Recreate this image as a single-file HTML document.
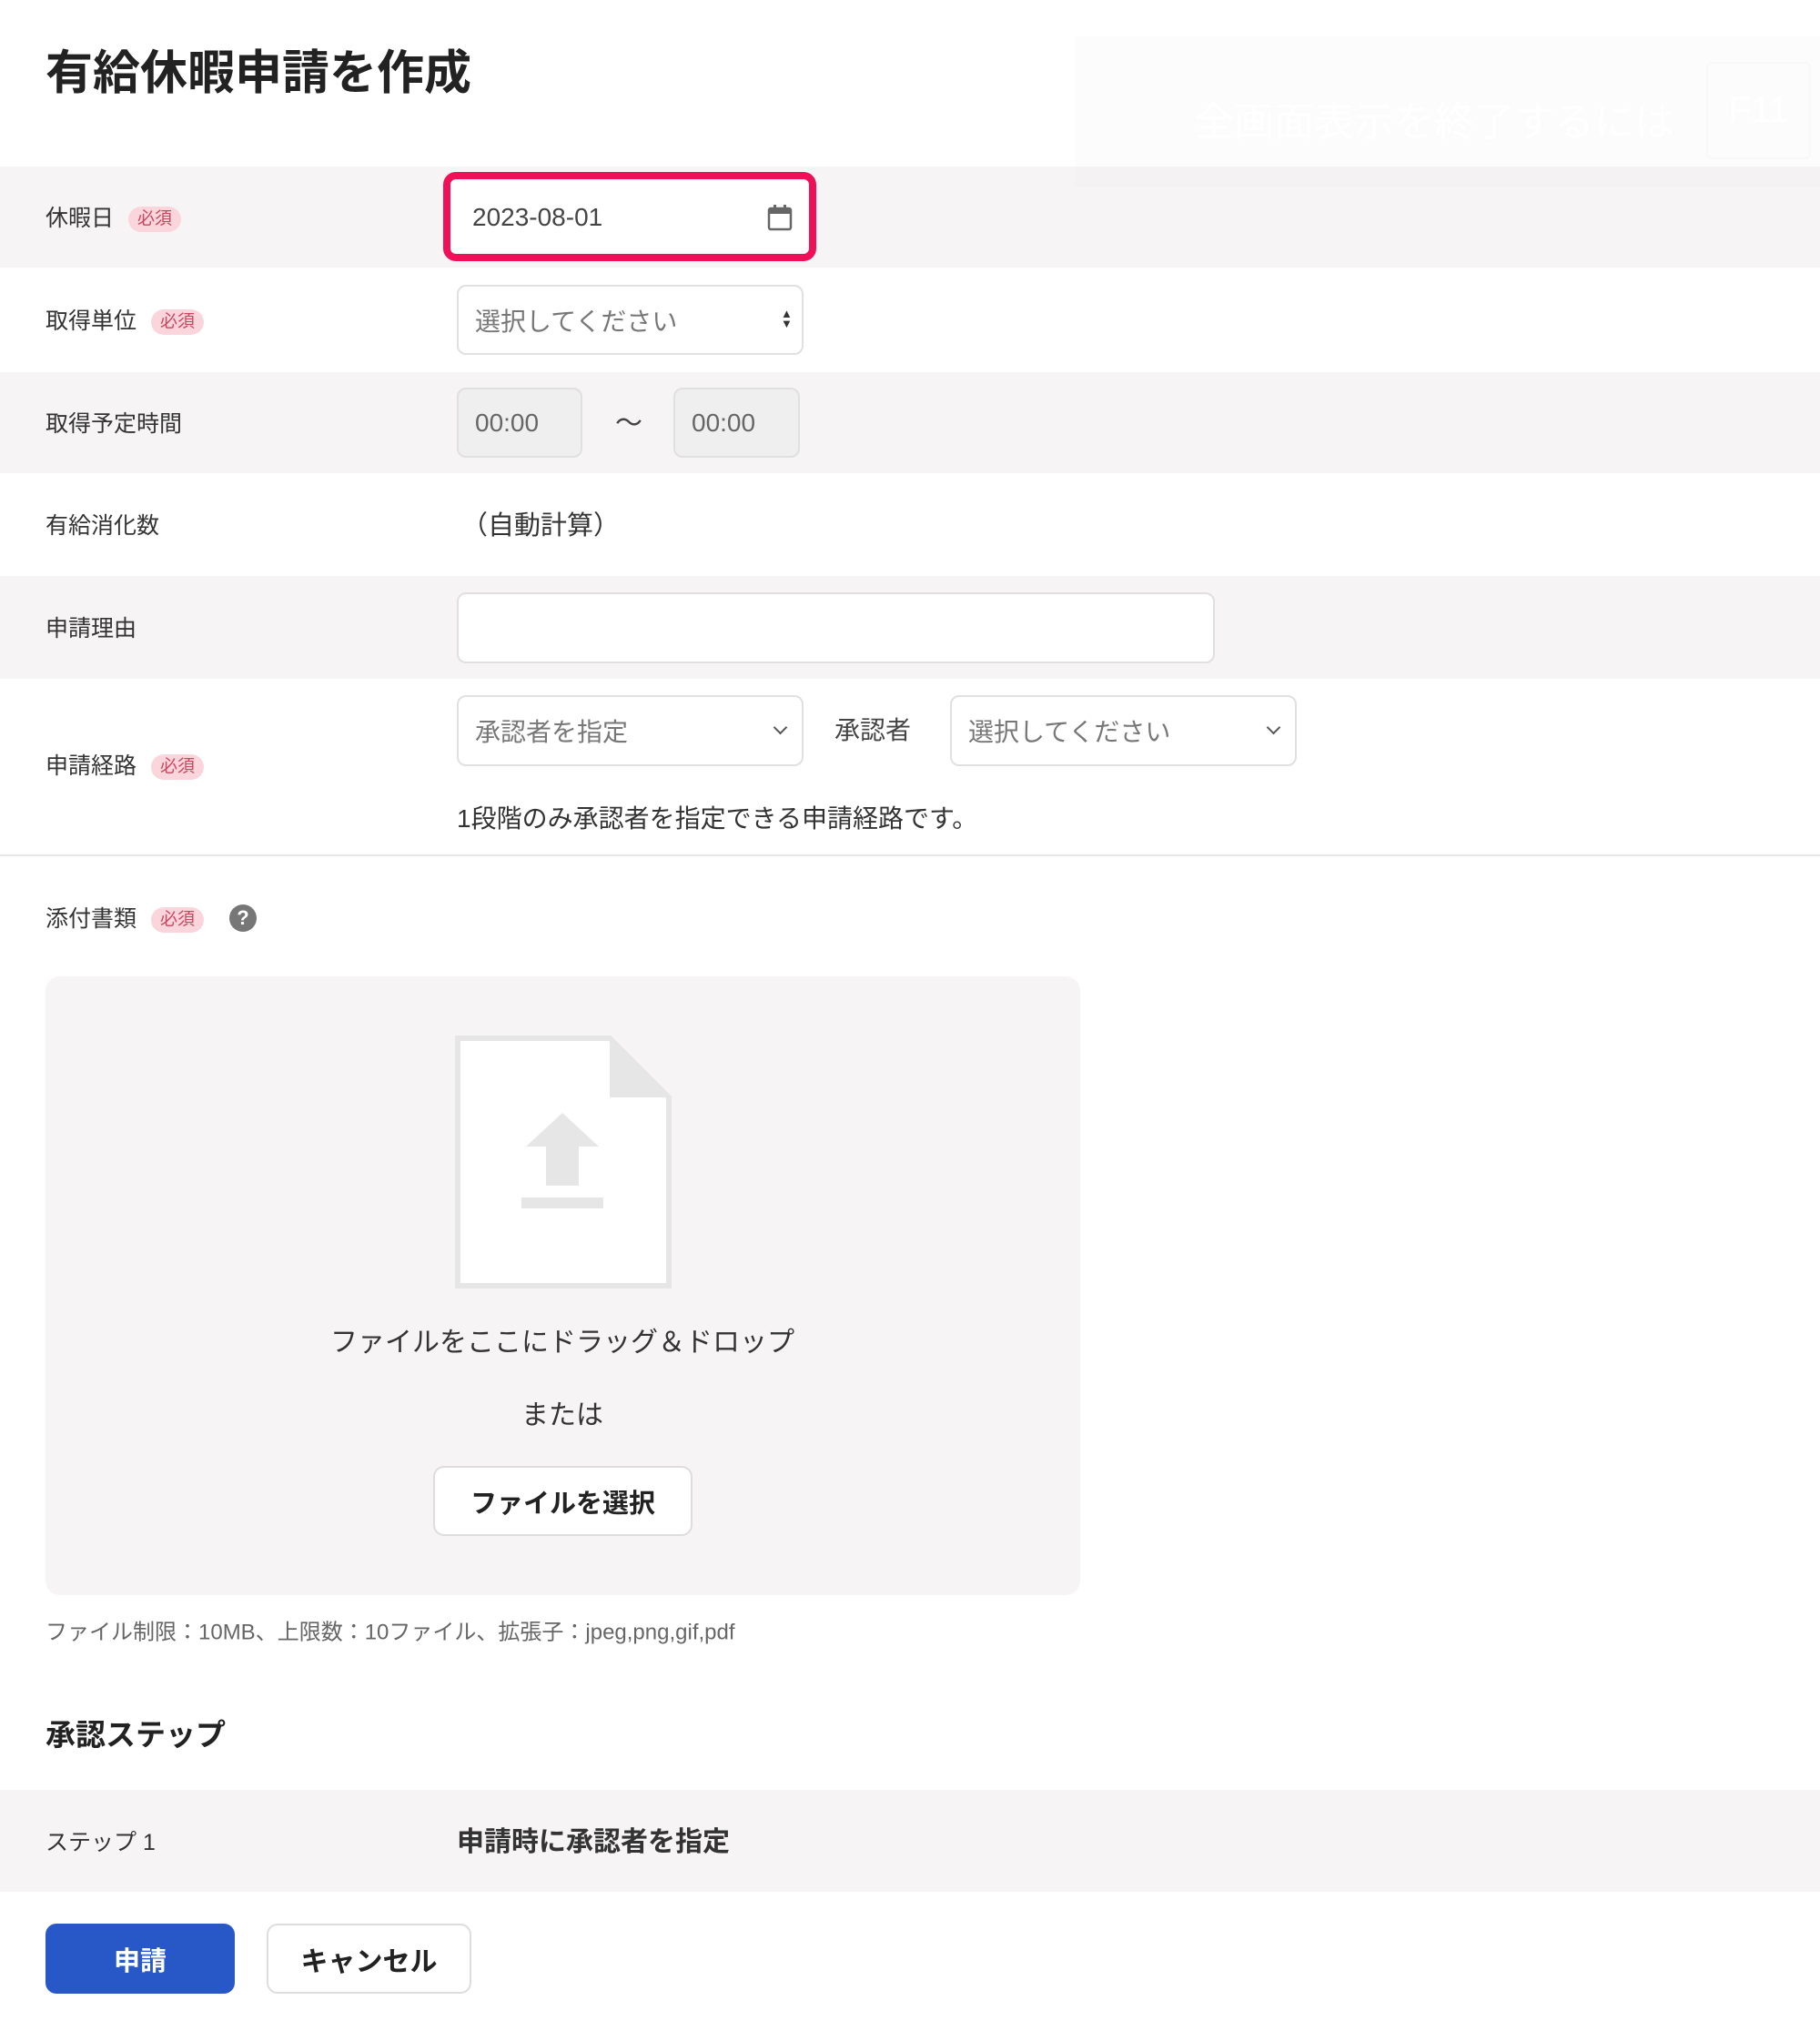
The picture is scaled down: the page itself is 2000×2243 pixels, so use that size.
<!DOCTYPE html>
<html><head><meta charset="utf-8"><style>
*{box-sizing:border-box;margin:0;padding:0}
body{width:2000px;height:2243px;background:#fff;position:relative;overflow:hidden;font-family:"Liberation Sans","Noto Sans CJK JP",sans-serif;color:#333}
.a{position:absolute}
.row{position:absolute;left:0;width:2000px}
.g{background:#f6f4f5}
.lbl{position:absolute;left:50px;font-size:25px;color:#333;transform:translateY(-50%);white-space:nowrap}
.badge{display:inline-block;background:#fbd5dc;color:#c9485f;font-size:19px;border-radius:14px;padding:1px 10px;margin-left:16px;vertical-align:middle;line-height:26px}
.inp{position:absolute;background:#fff;border:2px solid #e0e0e0;border-radius:10px;font-size:28px;color:#555;display:flex;align-items:center;padding-left:18px}
.ph{color:#777}
.mid{transform:translateY(-50%)}
.chev{position:absolute;width:11px;height:11px;border-right:2.5px solid #555;border-bottom:2.5px solid #555;transform:rotate(45deg)}
</style></head><body>
<div class="a" style="left:50px;top:38px;font-size:52px;font-weight:bold;color:#222">有給休暇申請を作成</div>

<div class="row g" style="top:183px;height:111px"></div>
<div class="row g" style="top:409px;height:111px"></div>
<div class="row g" style="top:633px;height:113px"></div>
<div class="row" style="top:939px;height:2px;background:#e6e6e6"></div>

<div class="a" style="left:1181px;top:40px;width:819px;height:143px;background:#fcfcfc"></div>
<div class="a" style="left:1181px;top:183px;width:819px;height:22px;background:#f4f2f3"></div>
<div class="a" style="left:1312px;top:98px;font-size:44px;color:#fff;white-space:nowrap">全画面表示を終了するには</div>
<div class="a" style="left:1875px;top:68px;width:115px;height:107px;border:2px solid #f8f8f8;border-radius:6px;color:#fff;font-size:40px;line-height:103px;text-align:center">F11</div>

<div class="lbl" style="top:238px">休暇日<span class="badge">必須</span></div>
<div class="a" style="left:487px;top:189px;width:410px;height:98px;border:8px solid #f0105a;border-radius:14px;background:#fff"></div>
<div class="a mid" style="left:519px;top:239px;font-size:28px;color:#444">2023-08-01</div>
<svg class="a" style="left:843px;top:224px" width="28" height="30" viewBox="0 0 28 30"><rect x="2" y="5" width="24" height="23" rx="2" fill="none" stroke="#666" stroke-width="2.5"/><rect x="2" y="5" width="24" height="6" fill="#666"/><rect x="7" y="1" width="3" height="6" fill="#666"/><rect x="18" y="1" width="3" height="6" fill="#666"/></svg>

<div class="lbl" style="top:351px">取得単位<span class="badge">必須</span></div>
<div class="inp ph" style="left:502px;top:313px;width:381px;height:77px">選択してください</div>
<div class="a" style="left:858px;top:339px;font-size:13px;line-height:11px;color:#333">▲<br>▼</div>

<div class="lbl" style="top:464px">取得予定時間</div>
<div class="inp" style="left:502px;top:426px;width:138px;height:77px;background:#efefef;color:#666">00:00</div>
<div class="a mid" style="left:676px;top:462px;font-size:30px;color:#444">〜</div>
<div class="inp" style="left:740px;top:426px;width:139px;height:77px;background:#efefef;color:#666">00:00</div>

<div class="lbl" style="top:576px">有給消化数</div>
<div class="a mid" style="left:507px;top:575px;font-size:29px;color:#333">（自動計算）</div>

<div class="lbl" style="top:689px">申請理由</div>
<div class="inp" style="left:502px;top:651px;width:833px;height:78px"></div>

<div class="lbl" style="top:840px">申請経路<span class="badge">必須</span></div>
<div class="inp ph" style="left:502px;top:764px;width:381px;height:78px">承認者を指定</div>
<div class="chev" style="left:852px;top:794px"></div>
<div class="a mid" style="left:917px;top:801px;font-size:28px;color:#444">承認者</div>
<div class="inp ph" style="left:1044px;top:764px;width:381px;height:78px">選択してください</div>
<div class="chev" style="left:1394px;top:794px"></div>
<div class="a mid" style="left:502px;top:898px;font-size:28px;color:#333">1段階のみ承認者を指定できる申請経路です。</div>

<div class="lbl" style="top:1008px">添付書類<span class="badge">必須</span></div>
<div class="a" style="left:252px;top:994px;width:30px;height:30px;border-radius:50%;background:#777;color:#fff;font-size:22px;font-weight:bold;text-align:center;line-height:30px">?</div>

<div class="a" style="left:50px;top:1073px;width:1137px;height:680px;background:#f6f4f5;border-radius:16px"></div>
<svg class="a" style="left:500px;top:1138px" width="238" height="278" viewBox="0 0 238 278"><path d="M3 3H170L235 68V275H3Z" fill="#fff" stroke="#e6e6e6" stroke-width="6"/><path d="M170 3V68H235Z" fill="#e6e6e6"/><path d="M118 85L158 122H136V165H100V122H78Z" fill="#e6e6e6"/><rect x="73" y="178" width="90" height="12" fill="#e6e6e6"/></svg>
<div class="a" style="left:618px;top:1472px;font-size:30px;color:#333;transform:translate(-50%,-50%);white-space:nowrap">ファイルをここにドラッグ＆ドロップ</div>
<div class="a" style="left:618px;top:1552px;font-size:30px;color:#333;transform:translate(-50%,-50%)">または</div>
<div class="a" style="left:476px;top:1611px;width:285px;height:77px;background:#fff;border:2px solid #ddd;border-radius:12px;font-size:29px;font-weight:bold;color:#222;display:flex;align-items:center;justify-content:center">ファイルを選択</div>
<div class="a mid" style="left:50px;top:1791px;font-size:24px;color:#666">ファイル制限：10MB、上限数：10ファイル、拡張子：jpeg,png,gif,pdf</div>

<div class="a mid" style="left:50px;top:1904px;font-size:33px;font-weight:bold;color:#222">承認ステップ</div>
<div class="row g" style="top:1967px;height:112px"></div>
<div class="lbl" style="top:2023px">ステップ 1</div>
<div class="a mid" style="left:502px;top:2021px;font-size:30px;font-weight:bold;color:#333">申請時に承認者を指定</div>

<div class="a" style="left:50px;top:2114px;width:208px;height:77px;background:#2857c8;border-radius:12px;color:#fff;font-size:29px;font-weight:bold;display:flex;align-items:center;justify-content:center">申請</div>
<div class="a" style="left:293px;top:2114px;width:225px;height:77px;background:#fff;border:2px solid #ddd;border-radius:12px;color:#222;font-size:30px;font-weight:bold;display:flex;align-items:center;justify-content:center">キャンセル</div>
</body></html>
